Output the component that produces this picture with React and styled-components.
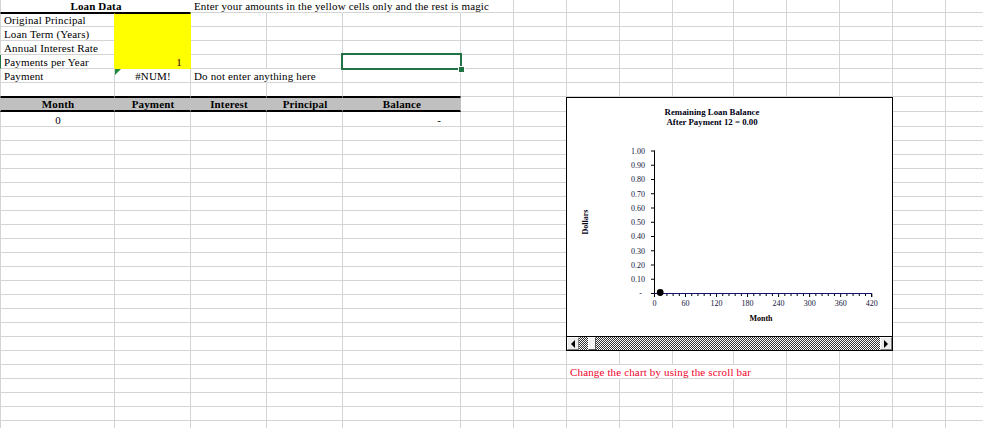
import React from 'react';
import styled, { createGlobalStyle } from 'styled-components';

const GRID = '#d4d4d4';
const YELLOW = '#ffff00';
const HEAD = '#c0c0c0';
const EXCEL_GREEN = '#217346';
const COLS = [115, 76, 76, 76, 118, 53, 53, 53, 53, 61, 53, 53, 53, 53, 53];
const ROW_H = [13, 14, 14, 14, 14, 14, 14, 15, 15, ...Array(22).fill(14)];

const Global = createGlobalStyle`
  html, body { margin: 0; padding: 0; background: #fff; overflow: hidden; }
  body { font-family: "Liberation Serif", "Times New Roman", serif; }
`;

const Page = styled.div`
  position: relative;
  width: 983px;
  height: 428px;
  overflow: hidden;
`;

const Sheet = styled.div`
  display: grid;
  grid-template-columns: ${COLS.map((c) => `${c}px`).join(' ')};
  grid-template-rows: ${ROW_H.map((h) => `${h}px`).join(' ')};
  width: max-content;
`;

const Cell = styled.div`
  box-sizing: border-box;
  position: relative;
  display: flex;
  align-items: flex-end;
  justify-content: ${(p) =>
    p.$align === 'center' ? 'center' : p.$align === 'right' ? 'flex-end' : 'flex-start'};
  grid-column: span ${(p) => p.$span || 1};
  padding: 0 ${(p) => (p.$padR != null ? p.$padR : 2)}px 0 3px;
  background: ${(p) => p.$fill || 'transparent'};
  border-right: 1px solid ${(p) => p.$right || GRID};
  border-bottom: ${(p) => p.$bottomW || 1}px solid ${(p) => p.$bottom || GRID};
  border-top: ${(p) => (p.$top ? `1px solid ${p.$top}` : '0')};
  border-left: ${(p) => (p.$left ? `${p.$leftW || 1}px solid ${p.$left}` : '0')};
  font-size: 11px;
  letter-spacing: 0.15px;
  line-height: 12px;
  font-weight: ${(p) => (p.$bold ? 700 : 400)};
  color: ${(p) => p.$color || '#000'};
  white-space: nowrap;
`;

const ErrorFlag = styled.span`
  position: absolute;
  top: 0;
  left: 0;
  width: 0;
  height: 0;
  border-top: 6px solid #1e8a3c;
  border-right: 6px solid transparent;
`;

const Selection = styled.div`
  position: absolute;
  left: 341px;
  top: 53px;
  width: 121px;
  height: 17px;
  box-sizing: border-box;
  border: 2px solid ${EXCEL_GREEN};
  pointer-events: none;
`;

const FillHandle = styled.span`
  position: absolute;
  right: -4px;
  bottom: -4px;
  width: 5px;
  height: 5px;
  background: ${EXCEL_GREEN};
  outline: 1px solid #fff;
`;

const ChartFrame = styled.div`
  position: absolute;
  left: 566px;
  top: 97px;
  width: 327px;
  display: flex;
  flex-direction: column;
  background: #fff;
`;

const ScrollBar = styled.div`
  display: flex;
  height: 14px;
  box-sizing: border-box;
  border-left: 1px solid #000;
  border-right: 1px solid #000;
  border-bottom: 1px solid #000;
`;

const ArrowButton = styled.div`
  width: 12px;
  box-sizing: border-box;
  display: flex;
  align-items: center;
  justify-content: center;
  background: #ececec;
  border-top: 1px solid #fff;
  border-left: 1px solid #fff;
  border-right: 1px solid #808080;
  border-bottom: 1px solid #808080;
`;

const Arrow = styled.span`
  width: 0;
  height: 0;
  border-top: 4px solid transparent;
  border-bottom: 4px solid transparent;
  ${(p) => (p.$dir === 'left' ? 'border-right: 4px solid #000;' : 'border-left: 4px solid #000;')}
`;

const Track = styled.div`
  flex: 1;
  display: flex;
  background: repeating-conic-gradient(#333 0 25%, #fff 0 50%) 0 0 / 2px 2px;
`;

const Thumb = styled.div`
  width: 8px;
  box-sizing: border-box;
  background: #f2f2f2;
  border-top: 1px solid #fff;
  border-left: 1px solid #fff;
  border-right: 1px solid #555;
  border-bottom: 1px solid #555;
`;

const headers = ['Month', 'Payment', 'Interest', 'Principal', 'Balance'];
const labels = ['Original Principal', 'Loan Term (Years)', 'Annual Interest Rate', 'Payments per Year'];

function buildRow(r) {
  const cells = [];
  for (let c = 0; c < COLS.length; c++) {
    const p = {};
    let content = null;
    if (c === 0) p.$left = GRID;

    if (r === 0) {
      if (c === 0) {
        cells.push(
          <Cell key={c} $span={2} $left={GRID} $align="center" $bold $bottom="#000" $right="transparent">
            Loan Data
          </Cell>
        );
        c++;
        continue;
      }
      if (c === 2) content = 'Enter your amounts in the yellow cells only and the rest is magic';
      if (c >= 2 && c <= 4) p.$right = 'transparent';
    } else if (r >= 1 && r <= 4) {
      if (c === 0) {
        content = labels[r - 1];
        p.$right = YELLOW;
        if (r === 1) p.$top = '#000';
        if (r === 4) p.$left = EXCEL_GREEN;
      }
      if (c === 1) {
        p.$fill = YELLOW;
        p.$right = YELLOW;
        p.$bottom = YELLOW;
        if (r === 1) p.$top = '#000';
        if (r === 4) { content = '1'; p.$align = 'right'; p.$padR = 8; p.$color = '#3a0000'; }
      }
    } else if (r === 5) {
      if (c === 0) content = 'Payment';
      if (c === 1) {
        content = (
          <>
            <ErrorFlag />
            #NUM!
          </>
        );
        p.$align = 'center';
      }
      if (c === 2) { content = 'Do not enter anything here'; p.$right = 'transparent'; }
    } else if (r === 6) {
      if (c <= 4) p.$bottom = '#000';
    } else if (r === 7) {
      if (c <= 4) {
        content = headers[c];
        p.$fill = HEAD;
        p.$right = HEAD;
        p.$top = '#000';
        p.$bottom = '#000';
        p.$bottomW = 2;
        p.$bold = true;
        p.$align = 'center';
        if (c === 0) p.$left = HEAD;
      }
    } else if (r === 8) {
      if (c === 0) { content = '0'; p.$align = 'center'; }
      if (c === 4) { content = '-'; p.$align = 'right'; p.$padR = 19; }
    } else if (r === 26) {
      if (c === 7) { content = 'Change the chart by using the scroll bar'; p.$color = '#f0002a'; }
      if (c >= 7 && c <= 9) p.$right = 'transparent';
    }
    cells.push(
      <Cell key={c} {...p}>
        {content}
      </Cell>
    );
  }
  return cells;
}

const PX_PER_MONTH = 217.2 / 420;
const X0 = 88.5;
const Y0 = 196.5;
const Y_STEP = 14.25;

function LoanChart({ payment }) {
  const yTicks = Array.from({ length: 11 }, (_, k) => k);
  const xMinor = Array.from({ length: 36 }, (_, k) => k * 12);
  const xLabels = [0, 60, 120, 180, 240, 300, 360, 420];
  const axisText = { fontFamily: '"Liberation Serif", serif', fontSize: 8, fill: '#14143c' };
  return (
    <svg width="327" height="240" viewBox="0 0 327 240" style={{ display: 'block' }}>
      <rect x="0.5" y="0.5" width="326" height="239" fill="#fff" stroke="#000" strokeWidth="1" />
      <g fontFamily='"Liberation Serif", serif' fontWeight="700" fontSize="8.8" fill="#000014" textAnchor="middle">
        <text x="146" y="18">Remaining Loan Balance</text>
        <text x="146" y="28">After Payment {payment} = 0.00</text>
      </g>
      <line x1={X0} y1={53.5} x2={X0} y2={Y0} stroke="#000" strokeWidth="1" />
      {yTicks.map((k) => {
        const y = Y0 - k * Y_STEP;
        return (
          <g key={k}>
            <line x1={X0 - 3.5} y1={y} x2={X0} y2={y} stroke="#000" strokeWidth="1" />
            <text x={k === 0 ? 76 : 79} y={y + 2.8} textAnchor="end" {...axisText}>
              {k === 0 ? '-' : (k / 10).toFixed(2)}
            </text>
          </g>
        );
      })}
      {xMinor.map((m) => {
        const x = X0 + m * PX_PER_MONTH;
        return <line key={m} x1={x} y1={Y0} x2={x} y2={Y0 + (m % 60 === 0 ? 3.5 : 2.5)} stroke="#000" strokeWidth="1" />;
      })}
      <line x1={X0 + 420 * PX_PER_MONTH} y1={Y0} x2={X0 + 420 * PX_PER_MONTH} y2={Y0 + 3.5} stroke="#000" strokeWidth="1" />
      <line x1={X0} y1={Y0} x2={X0 + 420 * PX_PER_MONTH} y2={Y0} stroke="#10106e" strokeWidth="1.2" />
      {xLabels.map((m) => (
        <text key={m} x={X0 + m * PX_PER_MONTH} y={208.5} textAnchor="middle" {...axisText}>
          {m}
        </text>
      ))}
      <text x="195" y="224" textAnchor="middle" fontFamily='"Liberation Serif", serif' fontWeight="700" fontSize="8" fill="#0a0000">
        Month
      </text>
      <text
        transform="translate(21.5 125) rotate(-90)"
        textAnchor="middle"
        fontFamily='"Liberation Serif", serif'
        fontWeight="700"
        fontSize="8"
        fill="#000014"
      >
        Dollars
      </text>
      <circle cx={X0 + payment * PX_PER_MONTH - 0.5} cy={Y0 - 1} r="3.4" fill="#000" />
    </svg>
  );
}

export default function App() {
  const payment = 12;
  const thumbOffset = 9;
  return (
    <Page>
      <Global />
      <Sheet>{ROW_H.map((_, r) => buildRow(r))}</Sheet>
      <Selection>
        <FillHandle />
      </Selection>
      <ChartFrame>
        <LoanChart payment={payment} />
        <ScrollBar>
          <ArrowButton>
            <Arrow $dir="left" />
          </ArrowButton>
          <Track>
            <Thumb style={{ marginLeft: thumbOffset }} />
          </Track>
          <ArrowButton>
            <Arrow $dir="right" />
          </ArrowButton>
        </ScrollBar>
      </ChartFrame>
    </Page>
  );
}
